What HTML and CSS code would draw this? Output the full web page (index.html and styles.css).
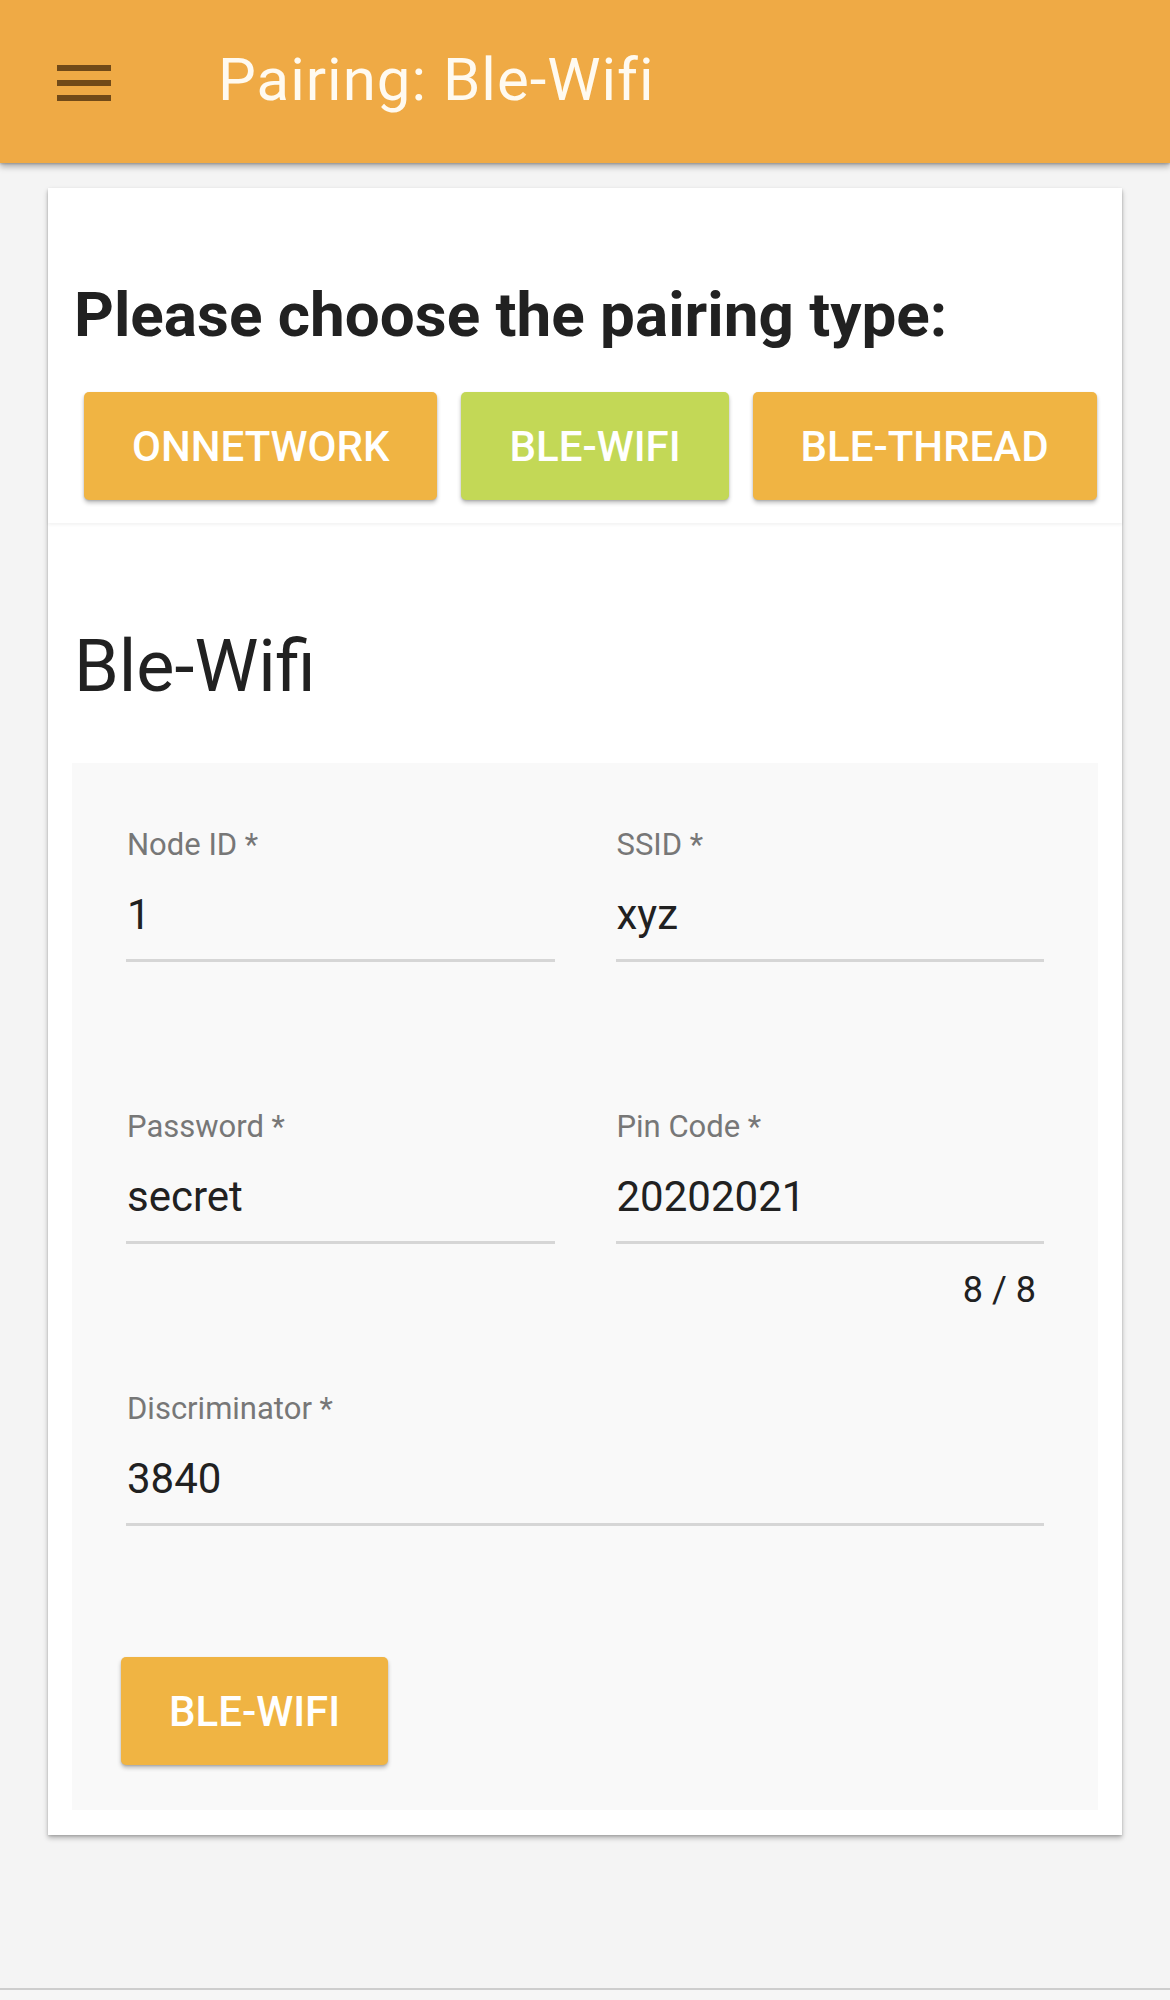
FILE: index.html
```html
<!DOCTYPE html>
<html lang="en">
<head>
<meta charset="utf-8">
<title>Pairing: Ble-Wifi</title>
<link rel="stylesheet" href="styles.css">
</head>
<body>
<div class="page">
  <header class="toolbar">
    <svg class="menu-icon" width="54" height="36" viewBox="0 0 54 36" aria-hidden="true">
      <rect x="0" y="0" width="54" height="6" fill="#714a18"/>
      <rect x="0" y="15" width="54" height="6" fill="#714a18"/>
      <rect x="0" y="30" width="54" height="6" fill="#714a18"/>
    </svg>
    <span class="toolbar-title">Pairing: Ble-Wifi</span>
  </header>

  <main class="content">
    <div class="card">
      <section class="card-section type-section">
        <h1 class="type-heading">Please choose the pairing type:</h1>
        <div class="type-buttons">
          <button class="btn btn-orange">ONNETWORK</button>
          <button class="btn btn-green">BLE-WIFI</button>
          <button class="btn btn-orange">BLE-THREAD</button>
        </div>
      </section>
      <section class="card-section form-section">
        <h2 class="form-title">Ble-Wifi</h2>
        <div class="form-panel">
          <div class="fields">
            <div class="field">
              <div class="field-label">Node ID *</div>
              <div class="field-value">1</div>
              <div class="field-line"></div>
              <div class="field-sub"></div>
            </div>
            <div class="field">
              <div class="field-label">SSID *</div>
              <div class="field-value">xyz</div>
              <div class="field-line"></div>
              <div class="field-sub"></div>
            </div>
            <div class="field">
              <div class="field-label">Password *</div>
              <div class="field-value">secret</div>
              <div class="field-line"></div>
              <div class="field-sub"></div>
            </div>
            <div class="field">
              <div class="field-label">Pin Code *</div>
              <div class="field-value">20202021</div>
              <div class="field-line"></div>
              <div class="field-sub"><span class="counter">8 / 8</span></div>
            </div>
            <div class="field field-wide">
              <div class="field-label">Discriminator *</div>
              <div class="field-value">3840</div>
              <div class="field-line"></div>
              <div class="field-sub"></div>
            </div>
          </div>
          <div class="submit-row">
            <button class="btn btn-orange">BLE-WIFI</button>
          </div>
        </div>
      </section>
    </div>
  </main>
  <div class="spacer"></div>
  <footer class="bottom-bar"></footer>
</div>
</body>
</html>
```

FILE: styles.css
```css
* {
  box-sizing: border-box;
}

html, body {
  margin: 0;
  padding: 0;
}

body {
  background: #f4f4f4;
  font-family: Roboto, "Noto Sans", "Liberation Sans", sans-serif;
  color: #212121;
}

.page {
  min-height: 2000px;
  display: flex;
  flex-direction: column;
}

.toolbar {
  height: 163px;
  background: #efaa45;
  display: flex;
  align-items: center;
  box-shadow: 0 4px 6px rgba(0, 0, 0, 0.28), 0 1px 2px rgba(0, 0, 0, 0.2);
  position: relative;
  z-index: 2;
  flex-shrink: 0;
}

.menu-icon {
  margin-left: 57px;
  margin-top: 3px;
  flex-shrink: 0;
}

.toolbar-title {
  margin-left: 107px;
  margin-bottom: 4px;
  font-size: 60px;
  line-height: 70px;
  font-weight: 400;
  letter-spacing: 1px;
  color: #fffaf0;
}

.content {
  padding: 25px 48px 0 48px;
}

.card {
  background: #ffffff;
  box-shadow: 0 3px 5px rgba(0, 0, 0, 0.28), 0 1px 2px rgba(0, 0, 0, 0.12);
}

.card-section {
  padding-left: 24px;
  padding-right: 24px;
}

.type-section {
  padding-top: 90px;
  padding-bottom: 23px;
  box-shadow: 0 2px 3px rgba(0, 0, 0, 0.05);
  position: relative;
}

.type-heading {
  margin: 0 0 0 2px;
  font-size: 62px;
  line-height: 74px;
  font-weight: 700;
  color: #212121;
}

.type-buttons {
  display: flex;
  gap: 24px;
  margin-top: 40px;
  margin-left: 12px;
}

.btn {
  height: 108px;
  padding: 0 48px;
  border: none;
  border-radius: 5px;
  font-family: Roboto, "Noto Sans", "Liberation Sans", sans-serif;
  font-size: 42px;
  font-weight: 500;
  color: #ffffff;
  box-shadow: 0 3px 4px rgba(0, 0, 0, 0.24), 0 1px 2px rgba(0, 0, 0, 0.14);
  cursor: pointer;
}

.btn-orange {
  background: #f0b443;
}

.btn-green {
  background: #c3d856;
}

.form-section {
  padding-top: 102px;
  padding-bottom: 25px;
}

.form-title {
  margin: 0 0 54px 2px;
  font-size: 72px;
  line-height: 84px;
  font-weight: 400;
  color: #212121;
}

.form-panel {
  background: #f9f9f9;
  padding: 64px 54px 45px 54px;
}

.fields {
  display: grid;
  grid-template-columns: 1fr 1fr;
  column-gap: 61px;
  row-gap: 80px;
}

.field-wide {
  grid-column: 1 / span 2;
}

.field-label {
  font-size: 31px;
  line-height: 36px;
  color: #777777;
  margin-left: 1px;
}

.field-value {
  margin-top: 27px;
  font-size: 42px;
  line-height: 50px;
  color: #212121;
  margin-left: 1px;
}

.field-line {
  margin-top: 19px;
  height: 3px;
  background: #d6d6d6;
}

.field-sub {
  height: 67px;
  display: flex;
  justify-content: flex-end;
  align-items: flex-end;
  padding-right: 8px;
}

.counter {
  font-size: 36px;
  line-height: 42px;
  color: #212121;
}

.submit-row {
  margin-top: 64px;
  margin-left: -5px;
}

.spacer {
  flex: 1;
}

.bottom-bar {
  height: 12px;
  border-top: 2px solid #cdcdcd;
  background: #f6f6f6;
  flex-shrink: 0;
}
```
